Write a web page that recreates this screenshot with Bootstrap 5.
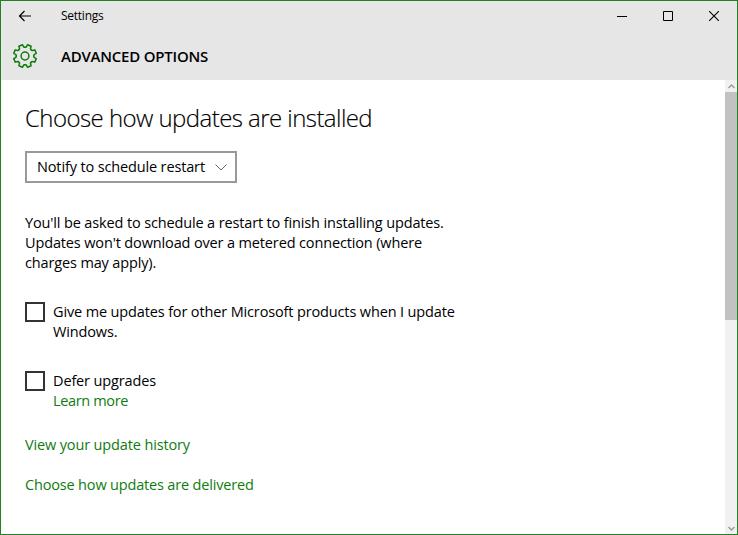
<!DOCTYPE html>
<html lang="en">
<head>
<meta charset="utf-8">
<meta name="viewport" content="width=device-width, initial-scale=1">
<title>Settings</title>
<link href="https://cdn.jsdelivr.net/npm/bootstrap@5.3.0/dist/css/bootstrap.min.css" rel="stylesheet">
<style>
body{font-family:"Open Sans","Noto Sans",sans-serif;font-size:14.5px;line-height:20px;letter-spacing:-.14px;color:#000;background:#fff}
.win{width:738px;height:535px;border:1px solid #218221}
.win-head{background:#e6e6e6;height:79px}
.title-bar{height:30px}
.back-btn,.win-btn,.gear{line-height:0}
.back-btn{width:48px;height:30px}
.win-btn{width:46px;height:30px}
.page-bar{height:49px}
.gear{width:48px}
.app-name{font-size:12px;margin-left:12px;letter-spacing:-.25px}
.page-name{font-size:15px;font-weight:600;margin-left:12px;letter-spacing:-.22px}
.pane{padding:21px 0 0 24px}
.pane h1{font-size:24px;line-height:34px;font-weight:300;letter-spacing:-.56px;-webkit-text-stroke:.15px #000;margin:0 0 16px}
.choice{width:212px;height:32px;border:2px solid #999;padding:0 8px 0 10px;background:#fff}
.note{margin:30px 0 29px}
.tick{width:20px;height:20px;border:2px solid #333;border-radius:0!important;margin:0 8px 0 0!important;float:none!important;flex:none}
.opt{margin-bottom:29px}
a{color:#107c10;text-decoration:none}
.more{letter-spacing:-.35px}
.delivery{letter-spacing:-.17px}
.scroller{width:12px;background:#f1f1f1;line-height:0}
.thumb{height:228px;background:#c2c2c2}
.arrow{height:12px}
</style>
<script src="https://cdn.jsdelivr.net/npm/bootstrap@5.3.0/dist/js/bootstrap.bundle.min.js"></script>
</head>
<body class="overflow-hidden">
<div class="win d-flex flex-column">
  <header class="win-head">
    <div class="title-bar d-flex align-items-center">
      <span class="back-btn d-flex align-items-center justify-content-center"><svg width="14" height="12" viewBox="0 0 14 12" fill="none" stroke="#000" stroke-width="1.2"><path d="M13 6H1.5M6.5 1 1.5 6l5 5"/></svg></span>
      <span class="app-name text-nowrap">Settings</span>
      <div class="d-flex ms-auto">
        <span class="win-btn d-flex align-items-center justify-content-center"><svg width="10" height="10"><path d="M0 5h10v1H0z"/></svg></span>
        <span class="win-btn d-flex align-items-center justify-content-center"><svg width="10" height="10" fill="none" stroke="#000"><path d="M.5.5h9v9h-9z"/></svg></span>
        <span class="win-btn d-flex align-items-center justify-content-center"><svg width="10" height="10" fill="none" stroke="#000" stroke-width="1.1"><path d="m0 0 10 10M10 0 0 10"/></svg></span>
      </div>
    </div>
    <div class="page-bar d-flex align-items-center">
      <span class="gear d-flex justify-content-center"><svg width="26" height="26" viewBox="-13 -13 26 26" fill="none" stroke="#107c10" stroke-width="1.5" stroke-linejoin="round" stroke-linecap="round">
        <defs><path id="tooth" d="M-3.33-8.04-2.2-8.9-1.9-11.4H1.9L2.2-8.9 3.33-8.04"/></defs>
        <circle r="3.9"/>
        <use href="#tooth" transform="rotate(22.5)"/><use href="#tooth" transform="rotate(67.5)"/><use href="#tooth" transform="rotate(112.5)"/><use href="#tooth" transform="rotate(157.5)"/><use href="#tooth" transform="rotate(202.5)"/><use href="#tooth" transform="rotate(247.5)"/><use href="#tooth" transform="rotate(292.5)"/><use href="#tooth" transform="rotate(337.5)"/>
      </svg></span>
      <span class="page-name text-nowrap">ADVANCED OPTIONS</span>
    </div>
  </header>
  <div class="d-flex flex-fill">
    <main class="pane flex-fill">
      <h1>Choose how updates are installed</h1>
      <div class="choice d-flex align-items-center justify-content-between text-nowrap"><span>Notify to schedule restart</span><svg width="12" height="7" fill="none" stroke="#666"><path d="M.5.5 6 6l5.5-5.5"/></svg></div>
      <p class="note text-nowrap">You'll be asked to schedule a restart to finish installing updates.<br>Updates won't download over a metered connection (where<br>charges may apply).</p>
      <div class="opt d-flex text-nowrap"><input class="tick form-check-input" type="checkbox" id="other"><label for="other">Give me updates for other Microsoft products when I update<br>Windows.</label></div>
      <div class="opt d-flex text-nowrap mb-4"><input class="tick form-check-input" type="checkbox" id="defer"><div><label class="d-block" for="defer">Defer upgrades</label><a class="d-block more" href="#">Learn more</a></div></div>
      <a class="d-block" href="#">View your update history</a>
      <a class="d-block delivery mt-3 pt-1" href="#">Choose how updates are delivered</a>
    </main>
    <div class="scroller d-flex flex-column">
      <span class="arrow d-flex align-items-center justify-content-center"><svg width="7" height="5" fill="none" stroke="#999" stroke-width="1.4"><path d="m.5 4 3-3 3 3"/></svg></span>
      <div class="thumb"></div>
      <span class="arrow mt-auto d-flex align-items-center justify-content-center"><svg width="7" height="5" fill="none" stroke="#999" stroke-width="1.4"><path d="m.5 1 3 3 3-3"/></svg></span>
    </div>
  </div>
</div>
</body>
</html>
